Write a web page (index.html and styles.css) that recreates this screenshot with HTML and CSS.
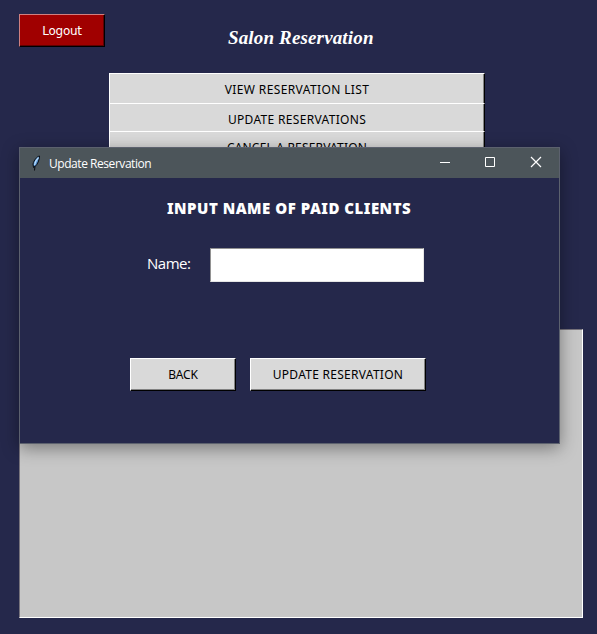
FILE: index.html
```html
<!DOCTYPE html>
<html lang="en">
<head>
<meta charset="utf-8">
<title>Salon Reservation</title>
<link rel="stylesheet" href="styles.css">
</head>
<body>
<main class="app">
  <header class="header">
    <button class="btn logout"><span>Logout</span></button>
    <h1 class="brand"><span>Salon Reservation</span></h1>
  </header>
  <nav class="menu">
    <button class="btn menu-item"><span class="t-view">VIEW RESERVATION LIST</span></button>
    <button class="btn menu-item"><span class="t-update">UPDATE RESERVATIONS</span></button>
    <button class="btn menu-item"><span class="t-cancel">CANCEL A RESERVATION</span></button>
  </nav>
  <section class="output"></section>
</main>
<section class="dialog" role="dialog">
  <header class="titlebar">
    <svg class="feather" width="12" height="16" viewBox="0 0 12 16">
      <path d="M9.500 1C7 1.500 4 5 3 9L3.500 12.500 5 11.500C7.500 9.500 9.500 5 9.500 1Z" fill="#5591d0" stroke="#080b10"/>
      <path d="M8.500 2.500C6.500 4.500 5 7 4.500 10" fill="none" stroke="#b9dcfa" stroke-width="1.200"/>
      <path d="M5 11L4.500 15.500" fill="none" stroke="#080b10"/>
    </svg>
    <span class="caption"><span>Update Reservation</span></span>
    <div class="controls">
      <svg width="45" height="30" viewBox="0 0 45 30"><path d="M15 14.500H25" stroke="#fff"/></svg>
      <svg width="45" height="30" viewBox="0 0 45 30"><path d="M15.500 9.500H24.500V18.500H15.500Z" stroke="#fff" fill="none"/></svg>
      <svg width="45" height="30" viewBox="0 0 45 30"><path d="M16 9L26 19M26 9L16 19" stroke="#fff" stroke-width="1.200"/></svg>
    </div>
  </header>
  <div class="dialog-body">
    <h2 class="heading"><span>INPUT NAME OF PAID CLIENTS</span></h2>
    <div class="field">
      <label for="name"><span>Name:</span></label>
      <input id="name" type="text">
    </div>
    <div class="actions">
      <button class="btn back"><span>BACK</span></button>
      <button class="btn submit"><span>UPDATE RESERVATION</span></button>
    </div>
  </div>
</section>
</body>
</html>
```
FILE: styles.css
```css
* { box-sizing: border-box; }
body { margin: 0; background: #25284b; color: #fff; font-family: "Noto Sans", sans-serif; }
h1, h2 { margin: 0; font-weight: 400; }
.app { width: 597px; height: 634px; padding: 14px 14px 0 19px; overflow: hidden; }
.header { display: flex; height: 59px; align-items: flex-start; }
.btn {
  display: flex; align-items: center; justify-content: center;
  margin: 0; padding: 0; border: 1px solid; border-color: #fff #000 #000 #fff;
  border-radius: 0; background: #d9d9d9; color: #000;
  box-shadow: inset -1px -1px #828282;
  font: 12px/16px "Noto Sans", sans-serif; white-space: nowrap;
}
.logout { width: 86px; height: 33px; background: #a00000; color: #fff; border-color: #cf8080 #000 #000 #cf8080; box-shadow: inset -1px -1px #600000; font-family: "DejaVu Sans", sans-serif; }
.logout span { letter-spacing: -.3px; }
.brand { margin: 11px 0 0 123px; font: italic 700 19px/26px "Z003", "URW Chancery L", "Liberation Serif", cursive; letter-spacing: .15px; white-space: nowrap; }
.menu { width: 376px; height: 256px; margin-left: 90px; }
.menu-item { width: 376px; height: 30px; border-width: 1px 1px 0; border-style: solid; box-shadow: inset -1px 0 #828282; padding-top: 2px; border-left-width: 1px; }
.menu-item + .menu-item { height: 28px; padding-top: 4px; }
.t-view { letter-spacing: .38px; }
.t-update { letter-spacing: .32px; }
.t-cancel { letter-spacing: .18px; }
.output { width: 564px; height: 289px; background: #c7c7c7; border: 1px solid; border-color: #77737c #fff #fff #77737c; }
.dialog { position: absolute; left: 19px; top: 147px; width: 541px; height: 297px; background: #25284b; border: 1px solid #5c616e; box-shadow: 0 4px 16px rgba(0,0,0,.4); }
.titlebar { display: flex; align-items: center; height: 30px; padding-left: 10px; background: #4c555a; }
.caption { margin-left: 7px; padding-top: 1px; font: 12px/16px "Open Sans", sans-serif; letter-spacing: -.45px; white-space: nowrap; }
.controls { display: flex; margin-left: auto; margin-right: -1px; }
.dialog-body { display: flex; flex-direction: column; }
.heading { margin: 18px 0 0 147px; font: 900 15px/24px "Noto Sans", sans-serif; letter-spacing: .5px; white-space: nowrap; }
.field { display: flex; align-items: center; height: 34px; margin: 28px 0 0 127px; }
.field label { width: 63px; font: 15px/20px "Open Sans", sans-serif; letter-spacing: -.5px; padding-bottom: 4px; }
.field input { width: 214px; height: 34px; padding: 0 4px; border: 1px solid; border-color: #929292 #e5e5e5 #e5e5e5 #929292; border-radius: 0; background: #fff; }
.actions { display: flex; gap: 14px; margin: 76px 0 0 110px; }
.back { width: 106px; height: 33px; letter-spacing: -.2px; }
.submit { width: 176px; height: 33px; letter-spacing: .28px; }
```
